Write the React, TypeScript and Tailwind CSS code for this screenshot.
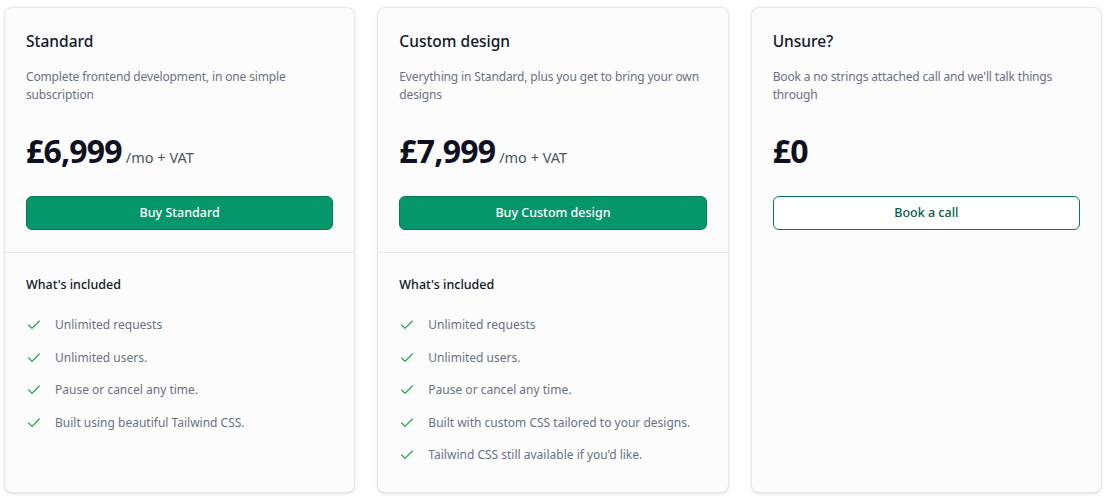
import { Check } from 'lucide-react'

type Plan = {
  name: string
  description: string
  price: string
  suffix?: string
  cta: string
  primary: boolean
  features?: string[]
}

const plans: Plan[] = [
  {
    name: 'Standard',
    description: 'Complete frontend development, in one simple subscription',
    price: '£6,999',
    suffix: '/mo + VAT',
    cta: 'Buy Standard',
    primary: true,
    features: [
      'Unlimited requests',
      'Unlimited users.',
      'Pause or cancel any time.',
      'Built using beautiful Tailwind CSS.'
    ]
  },
  {
    name: 'Custom design',
    description: 'Everything in Standard, plus you get to bring your own designs',
    price: '£7,999',
    suffix: '/mo + VAT',
    cta: 'Buy Custom design',
    primary: true,
    features: [
      'Unlimited requests',
      'Unlimited users.',
      'Pause or cancel any time.',
      'Built with custom CSS tailored to your designs.',
      'Tailwind CSS still available if you’d like.'
    ]
  },
  {
    name: 'Unsure?',
    description: "Book a no strings attached call and we'll talk things through",
    price: '£0',
    cta: 'Book a call',
    primary: false
  }
]

export default function App() {
  return (
    <div
      className="min-h-[500px] bg-white px-1 pt-[7px] pb-[7px]"
      style={{ fontFamily: '"Noto Sans", "Open Sans", sans-serif' }}
    >
      <div className="grid grid-cols-3 gap-[22px] w-[1098px]">
        {plans.map((plan) => (
          <div
            key={plan.name}
            className="min-h-[486px] rounded-lg border border-gray-200 bg-[#fcfcfd] shadow-sm"
          >
            {/* TOP */}
            <div className={`px-[21px] pt-[22px] pb-[22px] ${plan.features ? 'border-b border-gray-200' : ''}`}>
              <h2 className="text-[15.5px] leading-[22px] font-medium text-gray-900">
                {plan.name}
              </h2>
              <p className="mt-[16px] text-[12px] leading-[18px] tracking-[-0.15px] text-gray-500">
                {plan.description}
              </p>
              <p className="mt-[28px] flex items-baseline">
                <span className="text-[32px] leading-[38px] font-bold tracking-tight text-[#0f1123]">
                  {plan.price}
                </span>
                {plan.suffix && (
                  <span className="ml-1 text-[14.5px] text-gray-600">
                    {plan.suffix}
                  </span>
                )}
              </p>
              <button
                className={
                  plan.primary
                    ? 'mt-[26px] w-full h-[34px] rounded-md border border-[#047a55] bg-[#059669] text-[12.5px] font-medium text-white'
                    : 'mt-[26px] w-full h-[34px] rounded-md border border-[#047857] bg-white text-[12.5px] font-medium text-[#065f46]'
                }
              >
                {plan.cta}
              </button>
            </div>

            {/* FEATURES */}
            {plan.features && (
              <div className="px-[21px] pt-[23px] pb-6">
                <h3 className="text-[12.5px] leading-[18px] font-medium text-gray-900">
                  What's included
                </h3>
                <ul className="mt-[21px] flex flex-col gap-[12.5px]">
                  {plan.features.map((f) => (
                    <li key={f} className="flex items-center gap-[13px] text-[12px] leading-[20px] text-gray-500">
                      <Check className="w-4 h-4 text-[#16a34a] shrink-0" strokeWidth={1.75} />
                      <span>{f}</span>
                    </li>
                  ))}
                </ul>
              </div>
            )}
          </div>
        ))}
      </div>
    </div>
  )
}
